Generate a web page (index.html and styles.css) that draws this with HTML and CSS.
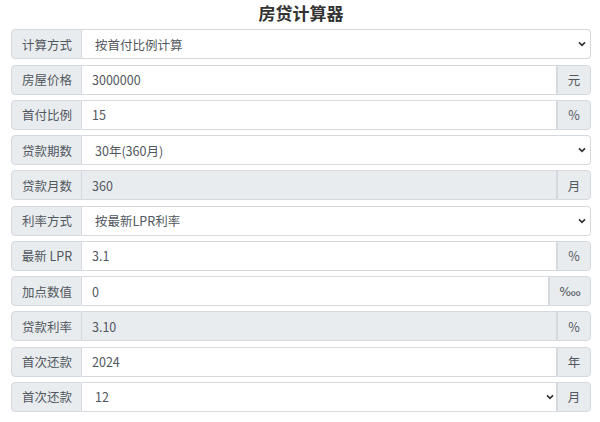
FILE: index.html
```html
<!DOCTYPE html>
<html lang="zh-CN">
<head>
<meta charset="utf-8">
<title>房贷计算器</title>
<link rel="stylesheet" href="styles.css">
</head>
<body>
<div class="wrap">
  <h1 class="title">房贷计算器</h1>
  <div class="row">
    <span class="label">计算方式</span>
    <select class="field select"><option>按首付比例计算</option></select>
  </div>
  <div class="row">
    <span class="label">房屋价格</span>
    <input class="field" value="3000000">
    <span class="addon">元</span>
  </div>
  <div class="row">
    <span class="label">首付比例</span>
    <input class="field" value="15">
    <span class="addon">%</span>
  </div>
  <div class="row">
    <span class="label">贷款期数</span>
    <select class="field select"><option>30年(360月)</option></select>
  </div>
  <div class="row">
    <span class="label">贷款月数</span>
    <input class="field disabled" value="360" disabled>
    <span class="addon">月</span>
  </div>
  <div class="row">
    <span class="label">利率方式</span>
    <select class="field select"><option>按最新LPR利率</option></select>
  </div>
  <div class="row">
    <span class="label">最新 LPR</span>
    <input class="field" value="3.1">
    <span class="addon">%</span>
  </div>
  <div class="row">
    <span class="label">加点数值</span>
    <input class="field" value="0">
    <span class="addon wide">‱</span>
  </div>
  <div class="row">
    <span class="label">贷款利率</span>
    <input class="field disabled" value="3.10" disabled>
    <span class="addon">%</span>
  </div>
  <div class="row">
    <span class="label">首次还款</span>
    <input class="field" value="2024">
    <span class="addon">年</span>
  </div>
  <div class="row">
    <span class="label">首次还款</span>
    <select class="field select select-mid"><option>12</option></select>
    <span class="addon">月</span>
  </div>
</div>
</body>
</html>
```

FILE: styles.css
```css
* {
  box-sizing: border-box;
}

html, body {
  margin: 0;
  padding: 0;
  background: #ffffff;
}

body {
  font-family: "Noto Sans CJK SC", "Noto Sans", sans-serif;
  font-size: 12.5px;
  color: #51575e;
}

.wrap {
  padding: 0 9px 0 11px;
}

.title {
  margin: 0 0 4.3px 0;
  height: 25px;
  line-height: 25px;
  text-align: center;
  font-size: 17px;
  font-weight: bold;
  color: #333333;
}

.row {
  display: flex;
  height: 30px;
  margin-bottom: 5.25px;
}

.label {
  flex: 0 0 71px;
  display: flex;
  align-items: center;
  justify-content: center;
  padding-left: 1px;
  background: #e9ecef;
  border: 1px solid #d5d9dd;
  border-radius: 4px 0 0 4px;
  color: #51575e;
  white-space: nowrap;
}

.field {
  flex: 1 1 auto;
  min-width: 0;
  height: 30px;
  margin: 0;
  padding: 0 10px;
  border: 1px solid #d5d9dd;
  border-left: none;
  border-radius: 0 4px 4px 0;
  background: #ffffff;
  font-family: inherit;
  font-size: 12.5px;
  color: #51575e;
  outline: none;
}

.field:not(:last-child) {
  border-radius: 0;
}

.disabled {
  background: #e9ecef;
}

.select {
  -webkit-appearance: none;
  appearance: none;
  padding-left: 13px;
  background-color: #ffffff;
  background-image: url("data:image/svg+xml,%3Csvg xmlns='http://www.w3.org/2000/svg' width='8' height='6' viewBox='0 0 8 6'%3E%3Cpath d='M1 1.3 L4 4.3 L7 1.3' fill='none' stroke='%23333' stroke-width='1.7'/%3E%3C/svg%3E");
  background-repeat: no-repeat;
  background-position: right 4.5px center;
  background-size: 8px 6px;
}

.select-mid {
  background-position: right 2.5px center;
}

.addon {
  flex: 0 0 34px;
  display: flex;
  align-items: center;
  justify-content: center;
  background: #e9ecef;
  border: 1px solid #d5d9dd;
  border-radius: 0 4px 4px 0;
  color: #51575e;
}

.addon.wide {
  flex-basis: 42px;
  font-family: "DejaVu Sans", "Noto Sans", sans-serif;
  font-size: 12.5px;
}
```
